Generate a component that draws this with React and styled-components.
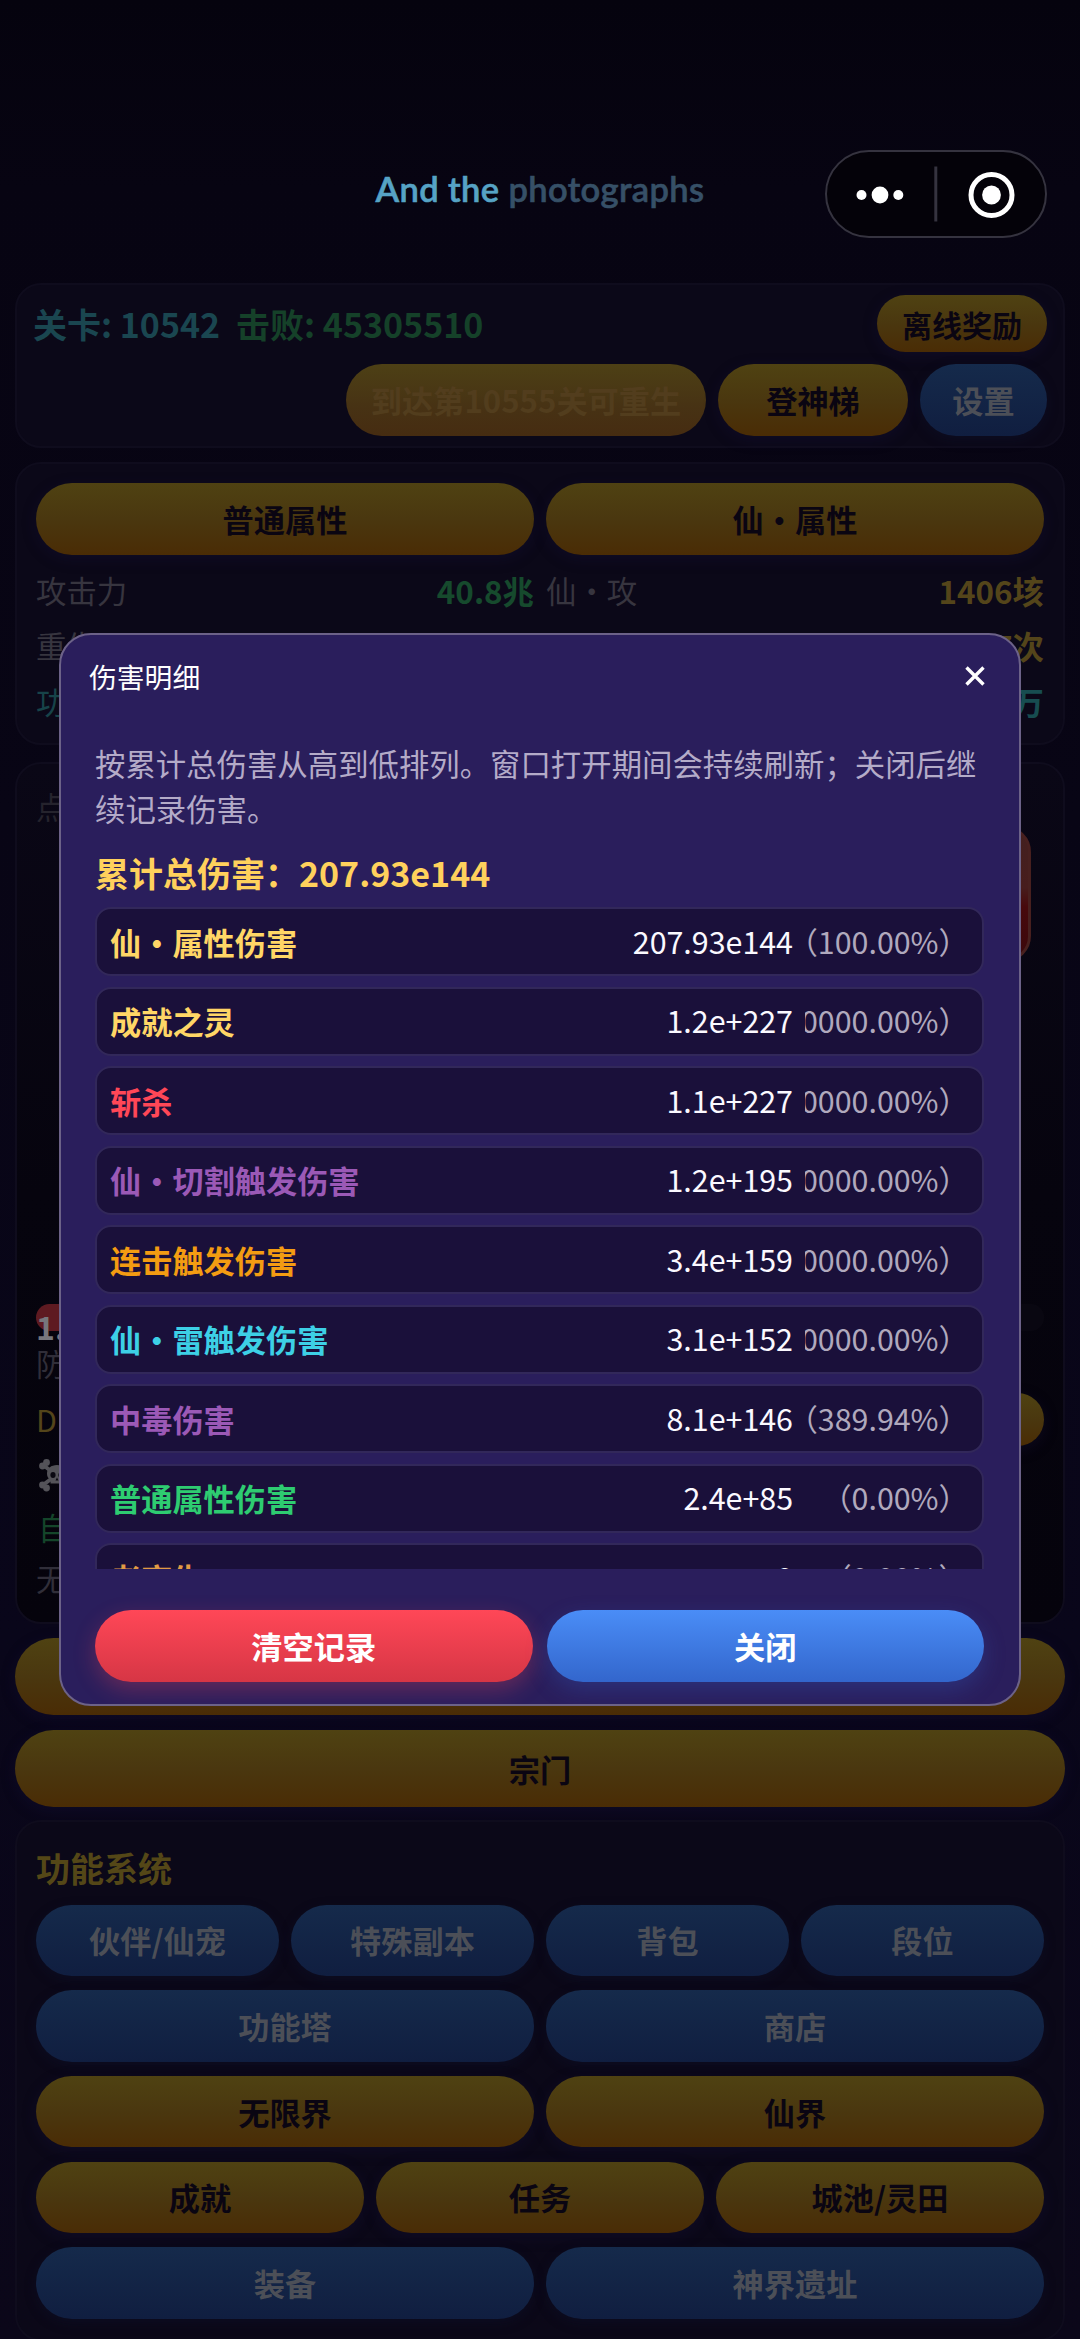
import styled, { createGlobalStyle, css } from "styled-components";

const GlobalStyle = createGlobalStyle`
  * {
    box-sizing: border-box;
  }

  body {
    margin: 0;
    background: #070412;
    font-family: "Noto Sans CJK SC", "Noto Sans", sans-serif;
  }
`;

const Page = styled.main`
  position: relative;
  display: flex;
  flex-direction: column;
  width: 1080px;
  height: 2339px;
  padding: 0 15px;
  overflow: hidden;
  background: linear-gradient(
    180deg,
    #05030e 0%,
    #070412 8%,
    #080515 35%,
    #09061a 70%,
    #0b0719 100%
  );
`;

const Header = styled.header`
  display: grid;
  grid-template-columns: 1fr auto 1fr;
  align-items: start;
  flex: none;
  height: 283px;
  padding: 150px 18px 0;
`;

const Lyric = styled.div`
  grid-column: 2;
  margin-top: 18px;
  color: #56a3c5;
  font-family: Lato, sans-serif;
  font-size: 34.5px;
  font-weight: 600;
  letter-spacing: 0.36px;
  line-height: 42px;
  white-space: nowrap;
  -webkit-text-stroke: 0.6px currentColor;

  span {
    color: #365067;
  }
`;

const Capsule = styled.div`
  display: flex;
  align-items: center;
  justify-self: end;
  width: 222px;
  height: 88px;
  border: 2.5px solid #35333f;
  border-radius: 44px;
  background: #040209;

  svg {
    display: block;
  }
`;

const panel = css`
  flex: none;
  border: 2px solid #0f0c1d;
  border-radius: 26px;
  background: #0b0818;
`;

const TopPanel = styled.section`
  ${panel}
  display: flex;
  flex-direction: column;
  gap: 12px;
  height: 165px;
  padding: 10px 16px;
`;

const StagePanel = styled.section`
  ${panel}
  height: 283px;
  margin-top: 14px;
  padding: 19px;
`;

const BattlePanel = styled.section`
  ${panel}
  height: 862px;
  margin-top: 17px;
  padding: 20px 19px;
  background: linear-gradient(180deg, #0a0716 0%, #06040e 50%, #05030c 100%);
`;

const SystemPanel = styled.section`
  ${panel}
  height: 521px;
  margin-top: 13px;
  padding: 24px 19px 0;
`;

const Line = styled.div`
  display: flex;
  align-items: center;
  justify-content: ${(p) => p.$justify || "space-between"};
  gap: 12px;
`;

const Progress = styled.div`
  display: flex;
  gap: 16px;
  padding-top: 1px;
  color: #1a4650;
  font-size: 34px;
  font-weight: 700;
  line-height: 50px;

  span + span {
    color: #154129;
  }
`;

const tones = {
  gold: css`
    background: linear-gradient(180deg, #4f4212 0%, #4a370f 50%, #4a2c05 100%);
    color: #0a0512;
    box-shadow: 0 4px 14px rgba(24, 18, 60, 0.35);
  `,
  worn: css`
    background: linear-gradient(180deg, #4d4015 0%, #473214 60%, #462c11 100%);
    color: #523d1d;
  `,
  blue: css`
    background: linear-gradient(180deg, #152a4b 0%, #101e40 100%);
    color: #4c4f57;
    box-shadow: 0 4px 12px rgba(14, 20, 50, 0.35);
  `,
  red: css`
    background: linear-gradient(180deg, #ff4757 0%, #d63645 100%);
    color: #fff;
    box-shadow: 0 8px 22px rgba(255, 71, 87, 0.28);
  `,
  sky: css`
    background: linear-gradient(180deg, #4a8df7 0%, #3366cc 100%);
    color: #fff;
    box-shadow: 0 8px 22px rgba(51, 102, 204, 0.28);
  `,
};

const Button = styled.button`
  flex: none;
  width: ${(p) => (p.$w ? `${p.$w}px` : "auto")};
  height: ${(p) => p.$h || 71.5}px;
  padding: 0;
  border: 0;
  border-radius: 40px;
  font-family: inherit;
  font-size: ${(p) => p.$size || 31.2}px;
  font-weight: 700;
  line-height: 40px;
  white-space: nowrap;
  ${(p) => tones[p.$tone]}
`;

const WideButton = styled(Button)`
  width: 100%;
  margin-top: ${(p) => p.$top}px;
`;

const Columns = styled.div`
  display: grid;
  grid-template-columns: repeat(${(p) => p.$n}, 1fr);
  column-gap: 12px;
`;

const Stats = styled(Columns)`
  margin-top: 8px;
`;

const Stat = styled.div`
  display: flex;
  justify-content: space-between;
  height: 55.5px;
  color: ${(p) => p.$label || "#37353f"};
  font-size: 30.4px;
  line-height: 55.5px;

  b {
    color: ${(p) => p.$value};
    font-size: 31.4px;
  }
`;

const Hint = styled.p`
  margin: 0;
  color: #25232d;
  font-size: 30.4px;
  line-height: 44px;
`;

const Enemy = styled.div`
  width: 136px;
  height: 136px;
  margin: -2px 13px 342px auto;
  border: 3px solid #48201f;
  border-radius: 26px;
  background: linear-gradient(180deg, #43201f 0%, #471d1d 45%, #47090c 60%, #3a070b 100%);
`;

const HealthBar = styled.div`
  position: relative;
  height: 27px;
  margin-bottom: 10px;
  border-radius: 14px;
  background: linear-gradient(90deg, #5e1a21 0 60%, #090711 60%);

  span {
    position: absolute;
    left: 0;
    top: 2px;
    color: #77777c;
    font-size: 32px;
    font-weight: 700;
    line-height: 40px;
  }
`;

const BattleLine = styled.div`
  display: flex;
  align-items: center;
  justify-content: space-between;
  height: ${(p) => p.$h || 44}px;
  margin-bottom: 7.5px;
  padding-left: ${(p) => p.$inset || 0}px;
  color: ${(p) => p.$color || "#302e39"};
  font-size: 30.4px;
  line-height: 44px;
`;

const SystemTitle = styled.h2`
  margin: 0 0 14.5px;
  color: #544717;
  font-size: 34px;
  font-weight: 700;
  line-height: 44px;
`;

const SystemRows = styled.div`
  display: flex;
  flex-direction: column;
  gap: 14.2px;
`;

const Modal = styled.div`
  position: absolute;
  left: 59px;
  top: 633px;
  display: flex;
  flex-direction: column;
  width: 962px;
  height: 1073px;
  border: 2px solid #6c6288;
  border-radius: 32px;
  background: #2a1e5c;
  overflow: hidden;
`;

const ModalHeader = styled.div`
  display: flex;
  align-items: center;
  justify-content: space-between;
  flex: none;
  height: 84px;
  padding: 0 34px 2px 28px;
  color: #fff;
  font-size: 27.8px;
  line-height: 40px;
`;

const ModalBody = styled.div`
  display: flex;
  flex-direction: column;
  padding: 22px 35px 0 34px;
`;

const Description = styled.p`
  margin: 0;
  color: #b4abc8;
  font-size: 30.4px;
  line-height: 44.7px;
`;

const Total = styled.div`
  margin-top: 17.6px;
  color: #ffd15c;
  font-size: 34px;
  font-weight: 700;
  line-height: 50px;
`;

const DamageList = styled.div`
  display: flex;
  flex-direction: column;
  gap: 10.5px;
  height: 662px;
  margin-top: 9px;
  overflow: hidden;
`;

const DamageRow = styled.div`
  display: grid;
  grid-template-columns: 1fr auto 164px;
  column-gap: 12px;
  align-items: center;
  flex: none;
  height: 69px;
  padding: 0 13px;
  border: 2px solid #32285a;
  border-radius: 16px;
  background: #1a103a;
  font-size: 30.4px;
  line-height: 44px;
`;

const DamageName = styled.b`
  color: ${(p) => p.$color};
  font-size: 31.2px;
`;

const DamageValue = styled.span`
  padding-bottom: 2px;
  color: #fbf9ff;
`;

// Right aligned, so long percentages are cut off on their left side
const Percent = styled.span`
  display: flex;
  justify-content: flex-end;
  padding-bottom: 2px;
  overflow: hidden;
  color: #b0a9bd;
  white-space: nowrap;
`;

const ModalActions = styled.div`
  display: grid;
  grid-template-columns: 1fr 1fr;
  column-gap: 14px;
  margin-top: 41px;
`;

const damages = [
  { name: "仙・属性伤害", value: "207.93e144", percent: "（100.00%）", color: "#ffd666" },
  { name: "成就之灵", value: "1.2e+227", percent: "0000.00%）", color: "#ffd666" },
  { name: "斩杀", value: "1.1e+227", percent: "0000.00%）", color: "#ff4757" },
  { name: "仙・切割触发伤害", value: "1.2e+195", percent: "0000.00%）", color: "#9b59b6" },
  { name: "连击触发伤害", value: "3.4e+159", percent: "0000.00%）", color: "#f39c12" },
  { name: "仙・雷触发伤害", value: "3.1e+152", percent: "0000.00%）", color: "#3dd0e6" },
  { name: "中毒伤害", value: "8.1e+146", percent: "（389.94%）", color: "#9b59b6" },
  { name: "普通属性伤害", value: "2.4e+85", percent: "（0.00%）", color: "#2ecc71" },
  { name: "老高生", value: "0", percent: "（0.00%）", color: "#e09a45" },
];

const systems = [
  { tone: "blue", items: ["伙伴/仙宠", "特殊副本", "背包", "段位"] },
  { tone: "blue", items: ["功能塔", "商店"] },
  { tone: "gold", items: ["无限界", "仙界"] },
  { tone: "gold", items: ["成就", "任务", "城池/灵田"] },
  { tone: "blue", items: ["装备", "神界遗址"] },
];

const CapsuleIcons = () => (
  <svg width="217" height="83" viewBox="0 0 217 83">
    <g fill="#fff">
      <circle cx="34.5" cy="42" r="5" />
      <circle cx="53" cy="42" r="8.4" />
      <circle cx="71.3" cy="42" r="5" />
      <circle cx="164.5" cy="42" r="9.4" />
    </g>
    <path d="M108.8 13.5v55" stroke="#35333f" strokeWidth="3" />
    <circle cx="164.5" cy="42" r="20.5" fill="none" stroke="#fff" strokeWidth="5" />
  </svg>
);

const CloseIcon = () => (
  <svg width="20" height="20" viewBox="0 0 20 20">
    <path d="M1.5 1.5l17 17M18.5 1.5l-17 17" stroke="#fff" strokeWidth="3.4" />
  </svg>
);

const Skull = () => (
  <svg width="34" height="34" viewBox="0 0 34 34" fill="#545359">
    <path
      d="M4 7l8 6M4 27l8-6M30 7l-8 6M30 27l-8-6"
      stroke="#545359"
      strokeWidth="4"
      strokeLinecap="round"
    />
    <circle cx="3.5" cy="8" r="3.4" />
    <circle cx="7.5" cy="4.5" r="3.4" />
    <circle cx="3.5" cy="27" r="3.4" />
    <circle cx="7.5" cy="30" r="3.4" />
    <path d="M18 7c-6 0-10 3.500-10 8.500 0 3 1 5 3.500 6v4h13v-4c2.500-1 3.500-3 3.500-6 0-5-4-8.500-10-8.500z" />
    <g fill="#0a0812">
      <ellipse cx="14" cy="17" rx="2.600" ry="3" />
      <ellipse cx="22" cy="17" rx="2.600" ry="3" />
      <path d="M18 19.500l1.500 3h-3z" />
    </g>
  </svg>
);

const App = () => {
  return (
    <>
      <GlobalStyle />
      <Page>
        <Header>
          <Lyric>
            And the <span>photographs</span>
          </Lyric>
          <Capsule>
            <CapsuleIcons />
          </Capsule>
        </Header>

        <TopPanel>
          <Line>
            <Progress>
              <span>关卡: 10542</span>
              <span>击败: 45305510</span>
            </Progress>
            <Button $tone="gold" $w={170} $h={57} $size={30}>
              离线奖励
            </Button>
          </Line>
          <Line $justify="flex-end">
            <Button $tone="worn" $w={360}>
              到达第10555关可重生
            </Button>
            <Button $tone="gold" $w={190}>
              登神梯
            </Button>
            <Button $tone="blue" $w={127}>
              设置
            </Button>
          </Line>
        </TopPanel>

        <StagePanel>
          <Columns $n={2}>
            <Button $tone="gold">普通属性</Button>
            <Button $tone="gold">仙・属性</Button>
          </Columns>
          <Stats $n={2}>
            <Stat $value="#164a2d">
              攻击力 <b>40.8兆</b>
            </Stat>
            <Stat $value="#54451a">
              仙・攻 <b>1406垓</b>
            </Stat>
            <Stat>重生</Stat>
            <Stat $value="#54451a">
              <i />
              <b>7次</b>
            </Stat>
            <Stat $label="#174349">功</Stat>
            <Stat $value="#174d50">
              <i />
              <b>万</b>
            </Stat>
          </Stats>
        </StagePanel>

        <BattlePanel>
          <Hint>点</Hint>
          <Enemy />
          <HealthBar>
            <span>1.</span>
          </HealthBar>
          <BattleLine>防</BattleLine>
          <BattleLine $h={53} $color="#54451a">
            D
            <Button $tone="gold" $w={130} $h={53} />
          </BattleLine>
          <BattleLine $inset={3}>
            <Skull />
          </BattleLine>
          <BattleLine $inset={2} $color="#14452a">
            自
          </BattleLine>
          <BattleLine>无</BattleLine>
        </BattlePanel>

        <WideButton $tone="gold" $h={76.5} $top={14} />
        <WideButton $tone="gold" $h={77} $top={15.5}>
          宗门
        </WideButton>

        <SystemPanel>
          <SystemTitle>功能系统</SystemTitle>
          <SystemRows>
            {systems.map((row) => (
              <Columns key={row.items[0]} $n={row.items.length}>
                {row.items.map((item) => (
                  <Button key={item} $tone={row.tone}>
                    {item}
                  </Button>
                ))}
              </Columns>
            ))}
          </SystemRows>
        </SystemPanel>

        <Modal>
          <ModalHeader>
            伤害明细
            <CloseIcon />
          </ModalHeader>
          <ModalBody>
            <Description>
              按累计总伤害从高到低排列。窗口打开期间会持续刷新；关闭后继续记录伤害。
            </Description>
            <Total>累计总伤害：207.93e144</Total>
            <DamageList>
              {damages.map((damage) => (
                <DamageRow key={damage.name}>
                  <DamageName $color={damage.color}>{damage.name}</DamageName>
                  <DamageValue>{damage.value}</DamageValue>
                  <Percent>{damage.percent}</Percent>
                </DamageRow>
              ))}
            </DamageList>
            <ModalActions>
              <Button $tone="red">清空记录</Button>
              <Button $tone="sky">关闭</Button>
            </ModalActions>
          </ModalBody>
        </Modal>
      </Page>
    </>
  );
};

export default App;
